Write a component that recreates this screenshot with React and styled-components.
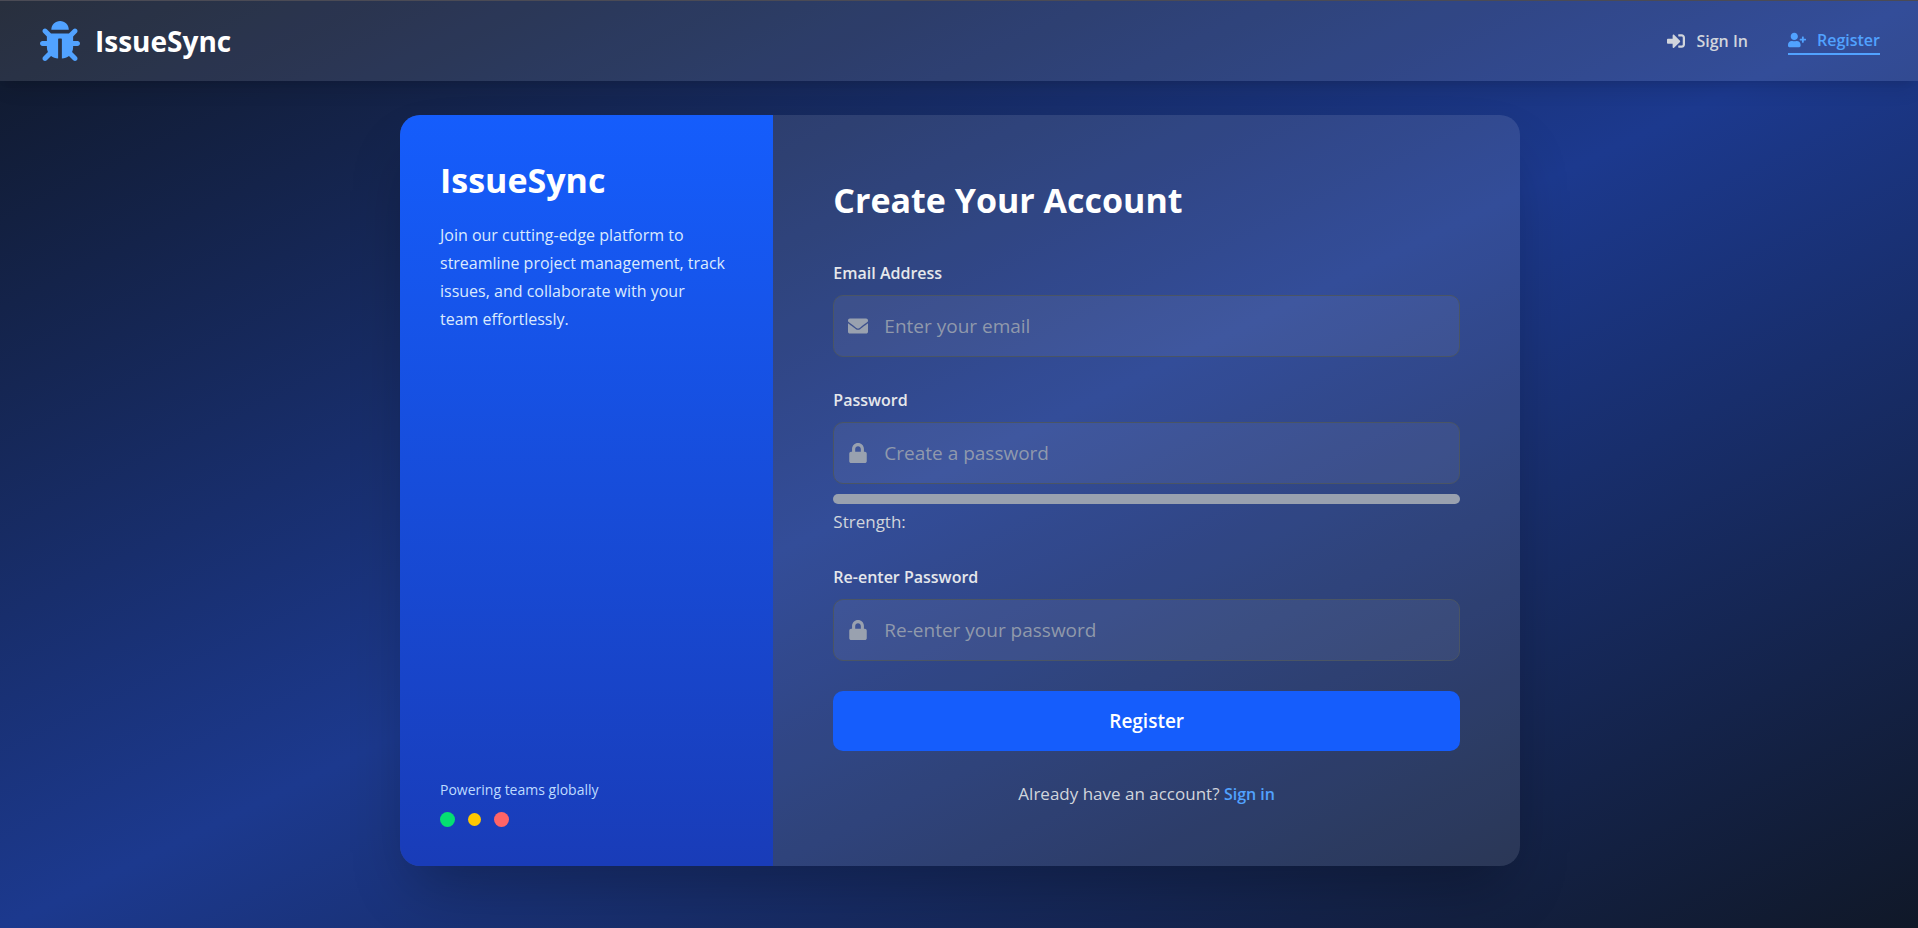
import React from "react";
import styled, { createGlobalStyle } from "styled-components";
import { FaBug, FaEnvelope, FaLock, FaSignInAlt, FaUserPlus } from "react-icons/fa";

const GlobalStyle = createGlobalStyle`
  *, *::before, *::after { box-sizing: border-box; }
  body {
    margin: 0;
    font-family: "Open Sans", "Noto Sans", sans-serif;
    color: #ffffff;
  }
  h1, h2, p { margin: 0; }
`;

const Page = styled.div`
  min-height: 100vh;
  display: flex;
  flex-direction: column;
  background: linear-gradient(to bottom right, #101828, #1c398e, #101828);
`;

const Header = styled.header`
  display: flex;
  align-items: center;
  justify-content: space-between;
  height: 81px;
  padding: 0 38px 0 40px;
  background: rgba(255, 255, 255, 0.1);
  border-top: 1px solid #4b4b55;
  box-shadow: 0 12px 18px -4px rgba(0, 0, 0, 0.1), 0 5px 8px -5px rgba(0, 0, 0, 0.1);
`;

const Brand = styled.a`
  display: flex;
  align-items: center;
  gap: 15px;
  color: #ffffff;
  font-size: 28px;
  font-weight: 700;
  line-height: 40px;
  text-decoration: none;

  svg {
    width: 40px;
    height: 40px;
    color: #51a2ff;
  }
`;

const Nav = styled.nav`
  display: flex;
  align-items: center;
  gap: 40px;
`;

const NavLink = styled.a`
  display: flex;
  align-items: center;
  gap: 11px;
  color: ${(p) => (p.$active ? "#51a2ff" : "#d1d5dc")};
  border-bottom: ${(p) => (p.$active ? "2px solid #51a2ff" : "none")};
  font-size: 16px;
  font-weight: 600;
  line-height: 26px;
  text-decoration: none;

  svg {
    width: 18px;
    height: 18px;
  }
`;

const Main = styled.main`
  display: flex;
  justify-content: center;
  padding: 34px 20px 62px 22px;
`;

const Card = styled.section`
  display: grid;
  grid-template-columns: 1fr 2fr;
  width: 100%;
  max-width: 1120px;
  border-radius: 20px;
  overflow: hidden;
  background: rgba(255, 255, 255, 0.1);
  box-shadow: 0 31px 62px -15px rgba(0, 0, 0, 0.3);
`;

const Aside = styled.aside`
  display: flex;
  flex-direction: column;
  justify-content: space-between;
  padding: 40px 40px 39px;
  background: linear-gradient(to bottom, #155dfc, #193cb8);
`;

const Title = styled.h1`
  font-size: 34px;
  font-weight: 700;
  line-height: 50px;
`;

const Intro = styled.p`
  margin-top: 16px;
  color: #dbeafe;
  font-size: 16px;
  line-height: 28px;
`;

const Tagline = styled.p`
  color: #bedbff;
  font-size: 14px;
  line-height: 20px;
`;

const Dots = styled.div`
  display: flex;
  align-items: center;
  gap: 13px;
  height: 15px;
  margin-top: 12px;
`;

const Dot = styled.span`
  width: ${(p) => p.$size}px;
  height: ${(p) => p.$size}px;
  border-radius: 50%;
  background: ${(p) => p.$color};
`;

const Panel = styled.div`
  padding: 60px 60px 59px;
`;

const Heading = styled.h2`
  font-size: 34px;
  font-weight: 700;
  line-height: 50px;
  margin-bottom: 35px;
`;

const Form = styled.form`
  display: flex;
  flex-direction: column;
  gap: 30px;
`;

const Label = styled.label`
  display: block;
  margin-bottom: 8px;
  color: #e5e7eb;
  font-size: 16px;
  font-weight: 600;
  line-height: 27px;
`;

const InputBox = styled.div`
  display: flex;
  align-items: center;
  gap: 16px;
  height: 62px;
  padding: 0 14px;
  border: 1px solid #4a5565;
  border-radius: 10px;
  background: rgba(255, 255, 255, 0.06);

  svg {
    flex: none;
    width: 20px;
    height: 20px;
    color: #99a1af;
  }
`;

const Input = styled.input`
  flex: 1;
  min-width: 0;
  padding: 0;
  border: 0;
  outline: 0;
  background: none;
  color: #ffffff;
  font: 400 19px/30px "Open Sans", "Noto Sans", sans-serif;

  &::placeholder {
    color: #99a1af;
    opacity: 0.9;
  }
`;

const Meter = styled.div`
  height: 10px;
  margin-top: 10px;
  border-radius: 5px;
  background: #99a1af;
`;

const Strength = styled.p`
  margin-top: 5px;
  color: #d1d5dc;
  font-size: 17px;
  line-height: 25px;
`;

const Submit = styled.button`
  height: 60px;
  border: 0;
  border-radius: 10px;
  background: #155dfc;
  color: #ffffff;
  font: 600 19px/30px "Open Sans", "Noto Sans", sans-serif;
  cursor: pointer;
`;

const Footnote = styled.p`
  margin-top: 30px;
  color: #d1d5dc;
  font-size: 17px;
  line-height: 26px;
  text-align: center;

  a {
    color: #51a2ff;
    font-size: 16px;
    font-weight: 600;
    text-decoration: none;
  }
`;

function Field({ id, label, type, placeholder, icon, children }) {
  return (
    <div>
      <Label htmlFor={id}>{label}</Label>
      <InputBox>
        {icon}
        <Input id={id} type={type} placeholder={placeholder} />
      </InputBox>
      {children}
    </div>
  );
}

export default function App() {
  return (
    <Page>
      <GlobalStyle />
      <Header>
        <Brand href="#home">
          <FaBug />
          IssueSync
        </Brand>
        <Nav>
          <NavLink href="#signin">
            <FaSignInAlt />
            Sign In
          </NavLink>
          <NavLink href="#register" $active>
            <FaUserPlus />
            Register
          </NavLink>
        </Nav>
      </Header>
      <Main>
        <Card>
          <Aside>
            <div>
              <Title>IssueSync</Title>
              <Intro>
                Join our cutting-edge platform to streamline project management, track issues, and
                collaborate with your <br />
                team effortlessly.
              </Intro>
            </div>
            <div>
              <Tagline>Powering teams globally</Tagline>
              <Dots>
                <Dot $size={15} $color="#05df72" />
                <Dot $size={13} $color="#ffc800" />
                <Dot $size={15} $color="#ff6467" />
              </Dots>
            </div>
          </Aside>
          <Panel>
            <Heading>Create Your Account</Heading>
            <Form onSubmit={(e) => e.preventDefault()}>
              <Field
                id="email"
                label="Email Address"
                type="email"
                placeholder="Enter your email"
                icon={<FaEnvelope />}
              />
              <Field
                id="password"
                label="Password"
                type="password"
                placeholder="Create a password"
                icon={<FaLock />}
              >
                <Meter />
                <Strength>Strength:</Strength>
              </Field>
              <Field
                id="confirm"
                label="Re-enter Password"
                type="password"
                placeholder="Re-enter your password"
                icon={<FaLock />}
              />
              <Submit type="submit">Register</Submit>
            </Form>
            <Footnote>
              Already have an account? <a href="#signin">Sign in</a>
            </Footnote>
          </Panel>
        </Card>
      </Main>
    </Page>
  );
}
